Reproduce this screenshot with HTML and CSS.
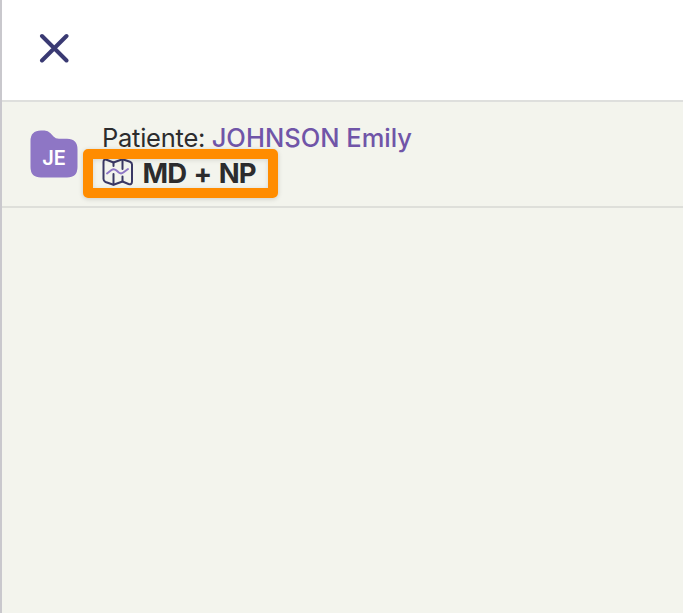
FILE: index.html
```
<!DOCTYPE html>
<html lang="fr">
<head>
<meta charset="utf-8">
<title>Patiente</title>
<link rel="stylesheet" href="styles.css">
</head>
<body>
<main class="panel">
  <header class="topbar">
    <svg class="close" viewBox="0 0 30 30" role="img" aria-label="Fermer"><path d="M3 3 27.500 27.500M27.500 3 3 27.500"/></svg>
  </header>
  <section class="patient">
    <div class="avatar">
      <svg class="folder" viewBox="0 0 48 48"><path d="M.5 11Q.5 .5 11 .5H14.500Q18 .5 20.500 3.300L23.500 6.600Q25.500 8.800 29 8.800H37Q47.500 8.800 47.500 19.500V37Q47.500 47.500 37 47.500H11Q.5 47.500 .5 37Z"/></svg>
      <span class="initials">JE</span>
    </div>
    <div class="details">
      <div class="name-line"><span class="label">Patiente:</span><span class="name">JOHNSON Emily</span></div>
      <div class="plan-line">
        <svg class="map" viewBox="0 0 32 28">
          <path class="outline" d="M11.500 4.500 4.500 1.800Q1.500 .800 1.500 4V21Q1.500 23 3.500 24L11.500 26.800 20.500 23.500 26.500 26Q30 27 30 23.500V6.500Q30 4.500 28 3.700L20.500 1.200Z"/>
          <path class="outline" d="M11.500 4.500V8M11.500 16V26.500M20.500 1.200V11M20.500 18.500V23.500"/>
          <path class="trail" d="M5 15.500 9.500 12Q12 10.300 14.500 12.500L16.800 14.500Q19 16.200 21.300 14.500L26 11"/>
        </svg>
        <span class="plan">MD + NP</span>
      </div>
      <div class="highlight"></div>
    </div>
  </section>
</main>
</body>
</html>
```
FILE: styles.css
```
* { box-sizing: border-box; }
body {
  margin: 0;
  background: #f3f4ed;
  color: #2c2c2e;
  font-family: Inter, "Liberation Sans", sans-serif;
}
.panel {
  height: 613px;
  border-left: 2px solid #c9c8cd;
  overflow: hidden;
}
.topbar {
  height: 102px;
  padding: 33px 0 0 37px;
  background: #fff;
  border-bottom: 2px solid #dedfdd;
}
.close {
  display: block;
  width: 30px;
  height: 30px;
  fill: none;
  stroke: #3a3a73;
  stroke-width: 4;
  stroke-linecap: round;
}
.patient {
  display: flex;
  gap: 24px;
  height: 106px;
  padding-left: 28px;
  border-bottom: 2px solid #dedfda;
}
.avatar {
  display: grid;
  width: 48px;
  height: 48px;
  margin-top: 28px;
}
.folder, .initials { grid-area: 1 / 1; }
.folder {
  width: 48px;
  height: 48px;
  fill: #8e76c5;
}
.initials {
  padding-top: 16px;
  color: #fff;
  font-size: 20px;
  font-weight: 600;
  line-height: 24px;
  text-align: center;
}
.details {
  position: relative;
  padding-top: 20px;
  white-space: nowrap;
}
.name-line {
  display: flex;
  gap: 7px;
  height: 34px;
  font-size: 25.5px;
  line-height: 32px;
}
.label {
  width: 102.7px;
  letter-spacing: -.25px;
}
.name {
  color: #7055a8;
  font-weight: 500;
}
.plan-line {
  display: flex;
  align-items: center;
  gap: 8.5px;
  height: 34px;
}
.map {
  width: 32px;
  height: 28px;
  margin-top: -2px;
  fill: none;
  stroke-linecap: round;
  stroke-linejoin: round;
}
.outline {
  stroke: #3a3865;
  stroke-width: 2;
}
.trail {
  stroke: #8e76c5;
  stroke-width: 2;
}
.plan {
  font-size: 27.5px;
  font-weight: 700;
  line-height: 34px;
  letter-spacing: -.9px;
  word-spacing: 1.8px;
}
.highlight {
  position: absolute;
  left: -19.5px;
  top: 47px;
  width: 195px;
  height: 49px;
  border: 10px solid #ff8c00;
  border-radius: 5px;
  box-shadow: 0 1px 5px rgba(0, 0, 0, .16), inset 0 1px 5px rgba(0, 0, 0, .12);
}
```
